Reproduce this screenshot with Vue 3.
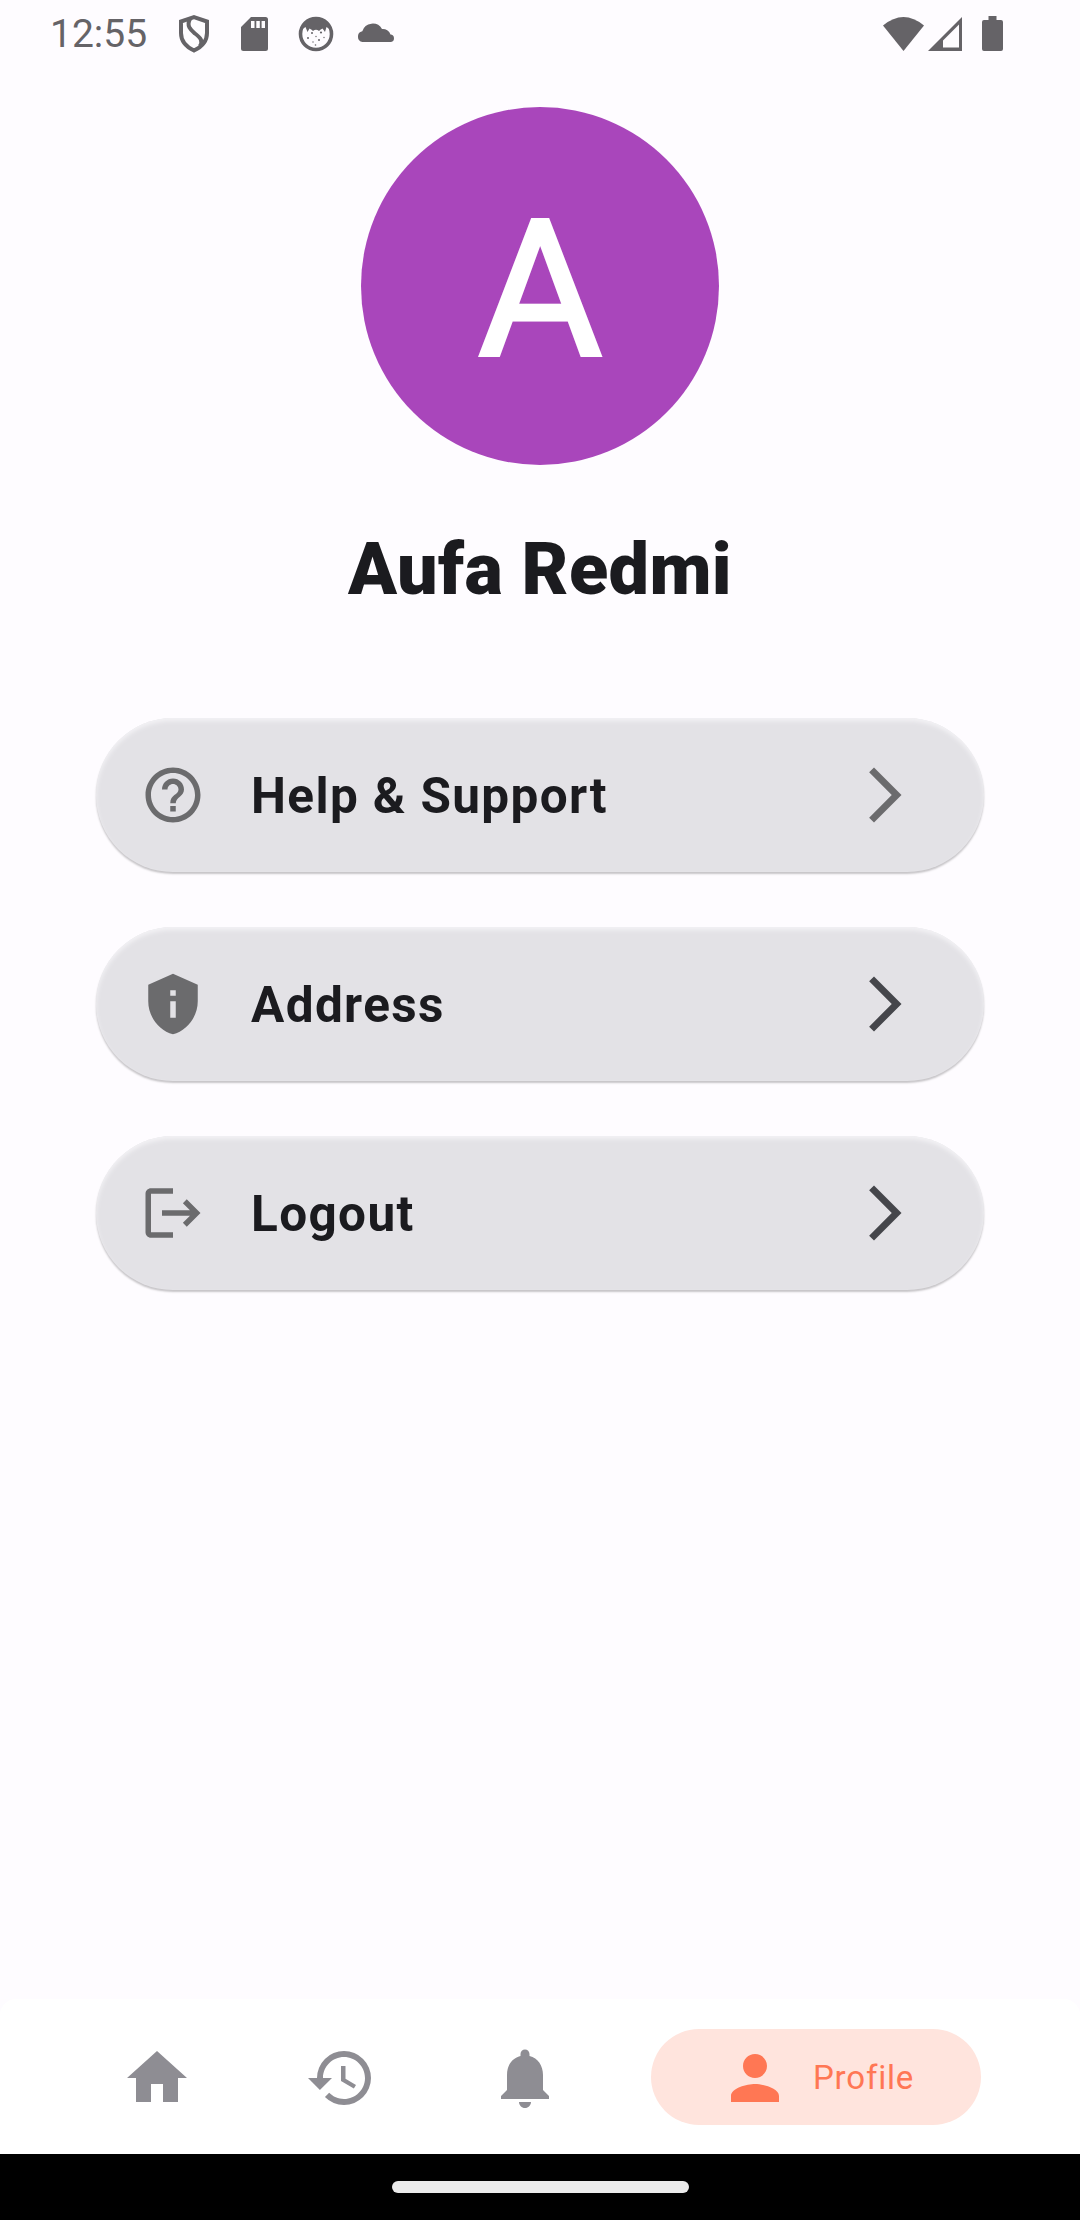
<template>
	<main class="app">
		<header class="status-bar">
			<span class="time">12:55</span>
			<div class="status-left">
				<svg class="shield" viewBox="0 0 32 38">
					<path d="M16 2.2 L29 6.5 V18 C29 26 23.500 32 16 35.500 C8.500 32 3 26 3 18 V6.500 Z" />
					<path d="M12 4 C8 11 13 15 17 18.500 C23 23 25 26 22 31" />
				</svg>
				<svg class="sd" viewBox="0 0 27 34">
					<path fill-rule="evenodd" d="M10 0H24.500Q27 0 27 2.500V31.500Q27 34 24.500 34H2.500Q0 34 0 31.500V10ZM10 4V11H13.500V4ZM15.300 4V11H18.800V4ZM20.600 4V11H24V4Z" />
				</svg>
				<svg class="face" viewBox="0 0 36 36">
					<circle class="ring" cx="18" cy="18" r="15.500" />
					<path d="M3 14C4 5 11 2 18 2S32 5 33 14L28.500 11L27 16L24.500 12.500Q22 13.500 21 15Q18 12.500 15 15Q14 13.500 11.500 12.500L9.500 16L7.500 11Z" />
					<circle v-for="(dot, index) in freckles" :key="index" :cx="dot[0]" :cy="dot[1]" :r="dot[2]" />
				</svg>
				<svg class="cloud" viewBox="0 0 38 20">
					<path d="M5.500 20A5.500 5.500 0 0 1 5.300 9.200A10.800 10.800 0 0 1 25 7A8 8 0 0 1 33.500 12.500A3.800 3.800 0 0 1 34 20Z" />
				</svg>
			</div>
			<div class="status-right">
				<svg class="wifi" viewBox="0 0 41 34">
					<path d="M0 8.500Q20.500-8.500 41 8.500L20.500 34Z" />
				</svg>
				<svg class="signal" viewBox="0 0 34 34">
					<path fill-rule="evenodd" d="M34 0V34H0ZM31 7.500L15 23.500V30.500H31Z" />
				</svg>
				<svg class="battery" viewBox="0 0 21 35">
					<path d="M6.500 0H14.500V4H19Q21 4 21 6V33Q21 35 19 35H2Q0 35 0 33V6Q0 4 2 4H6.500Z" />
				</svg>
			</div>
		</header>

		<section class="profile">
			<div class="avatar"><span>A</span></div>
			<h1>Aufa Redmi</h1>

			<div class="menu">
				<button v-for="item in menu" :key="item.label" class="card">
					<svg class="icon" viewBox="0 0 24 24"><path fill-rule="evenodd" :d="item.icon" /></svg>
					<span>{{ item.label }}</span>
					<svg :class="['chevron', { muted: item.muted }]" viewBox="0 0 24 24">
						<path d="M6.230 20.230 8 22l10-10L8 2 6.230 3.770 14.460 12z" />
					</svg>
				</button>
			</div>
		</section>

		<nav class="tabs">
			<button v-for="tab in tabs" :key="tab.name" :class="['tab', { active: tab.name == currentTab }]" @click="currentTab = tab.name">
				<svg viewBox="0 0 24 24"><path :d="tab.icon" /></svg>
				<span v-if="tab.name == currentTab">{{ tab.name }}</span>
			</button>
		</nav>

		<footer class="gesture-bar">
			<div class="handle"></div>
		</footer>
	</main>
</template>

<script setup>
import { ref } from 'vue'

const currentTab = ref('Profile')

const menu = [
	{
		label: 'Help & Support',
		icon: 'M11 18h2v-2h-2v2zm1-16C6.480 2 2 6.480 2 12s4.480 10 10 10 10-4.480 10-10S17.520 2 12 2zm0 18c-4.410 0-8-3.590-8-8s3.590-8 8-8 8 3.590 8 8-3.590 8-8 8zm0-14c-2.210 0-4 1.790-4 4h2c0-1.100.9-2 2-2s2 .9 2 2c0 2-3 1.750-3 5h2c0-2.250 3-2.500 3-5 0-2.210-1.790-4-4-4z',
		muted: true
	},
	{
		label: 'Address',
		icon: 'M12 1 3 5v6c0 5.550 3.840 10.740 9 12 5.160-1.260 9-6.450 9-12V5zM11 7h2v2h-2zM11 11h2v6h-2z'
	},
	{
		label: 'Logout',
		icon: 'M17 7l-1.410 1.410L18.170 11H8v2h10.170l-2.580 2.580L17 17l5-5zM4 5h8V3H4c-1.100 0-2 .9-2 2v14c0 1.100.9 2 2 2h8v-2H4z'
	}
]

const tabs = [
	{ name: 'Home', icon: 'M10 20v-6h4v6h5v-8h3L12 3 2 12h3v8z' },
	{
		name: 'History',
		icon: 'M13 3a9 9 0 0 0-9 9H1l3.890 3.890.07.14L9 12H6c0-3.870 3.130-7 7-7s7 3.130 7 7-3.130 7-7 7c-1.930 0-3.680-.79-4.940-2.060l-1.420 1.420A8.954 8.954 0 0 0 13 21a9 9 0 0 0 0-18zm-1 5v5l4.280 2.540.72-1.210-3.500-2.080V8z'
	},
	{
		name: 'Notifications',
		icon: 'M12 22c1.100 0 2-.9 2-2h-4c0 1.100.89 2 2 2zm6-6v-5c0-3.070-1.640-5.640-4.500-6.320V4c0-.83-.67-1.500-1.500-1.500s-1.500.67-1.500 1.500v.68C7.630 5.360 6 7.920 6 11v5l-2 2v1h16v-1z'
	},
	{
		name: 'Profile',
		icon: 'M12 12c2.210 0 4-1.790 4-4s-1.790-4-4-4-4 1.790-4 4 1.790 4 4 4zm0 2c-2.670 0-8 1.340-8 4v2h16v-2c0-2.660-5.330-4-8-4z'
	}
]

const freckles = [
	[14, 17, 1], [23, 16.5, 1.1], [10, 22, 1], [18, 20.5, 0.7],
	[26, 21.5, 0.7], [15, 26, 0.7], [21, 24, 1], [17.5, 29, 0.8]
]
</script>

<style>
body {
	background-color: #fefcff;
}
</style>

<style scoped>
* {
	margin: 0;
	padding: 0;
	box-sizing: border-box;
	font-family: Roboto, 'Liberation Sans', sans-serif;
}

.app {
	display: flex;
	flex-direction: column;
	height: 2220px;
	background-color: #fefcff;
}

svg {
	display: block;
	flex: none;
	fill: currentColor;
}

button {
	border: none;
	cursor: pointer;
}

.status-bar {
	display: flex;
	align-items: center;
	height: 67px;
	padding: 0 77px 0 50px;
	color: #656367;
}

.time {
	width: 128px;
	padding-top: 2px;
	font-size: 39px;
	line-height: 67px;
}

.status-left,
.status-right {
	display: flex;
	align-items: center;
}

.status-right {
	margin-left: auto;
}

.shield {
	width: 32px;
	height: 38px;
	fill: none;
	stroke: currentColor;
	stroke-width: 4;
}

.sd {
	width: 27px;
	height: 34px;
	margin-left: 31px;
}

.face {
	width: 36px;
	height: 36px;
	margin-left: 30px;
}

.face .ring {
	fill: none;
	stroke: currentColor;
	stroke-width: 3.600;
}

.cloud {
	width: 38px;
	height: 20px;
	margin: 0 0 3px 23px;
}

.wifi {
	width: 41px;
	height: 34px;
	margin-right: 4px;
}

.signal {
	width: 34px;
	height: 34px;
	margin-right: 20px;
}

.battery {
	width: 21px;
	height: 35px;
}

.profile {
	flex: 1;
	display: flex;
	flex-direction: column;
	align-items: center;
	padding-top: 40px;
}

.avatar {
	display: flex;
	justify-content: center;
	align-items: center;
	width: 358px;
	height: 358px;
	padding-top: 9px;
	border-radius: 50%;
	background-color: #a946bb;
	color: #fff;
	font-size: 192px;
	line-height: 1;
	-webkit-text-stroke: 3px #fff;
}

h1 {
	margin-top: 62px;
	color: #1b1b1f;
	font-size: 72px;
	font-weight: 900;
	line-height: 86px;
	letter-spacing: 0.400px;
}

.menu {
	display: flex;
	flex-direction: column;
	gap: 55px;
	width: 888px;
	margin-top: 105px;
}

.card {
	display: flex;
	align-items: center;
	height: 154px;
	padding: 0 66px 0 44px;
	border-radius: 77px;
	background-color: #e3e2e6;
	box-shadow: inset 0 3px 4px #f3f2f5, 0 2px 2px rgba(0, 0, 0, 0.22);
	color: #1b1b1f;
	font-size: 49.500px;
	font-weight: 700;
	letter-spacing: 1.375px;
}

.card span {
	padding-top: 2px;
}

.icon {
	width: 66px;
	height: 66px;
	margin-right: 45px;
	color: #6b6b6d;
}

.chevron {
	width: 66px;
	height: 66px;
	margin-left: auto;
	color: #45464b;
}

.chevron.muted {
	color: #6b6b6d;
}

.tabs {
	display: flex;
	align-items: center;
	height: 155px;
	padding: 0 99px 0 121px;
	border-radius: 16px 16px 0 0;
	background-color: #fff;
}

.tab {
	display: flex;
	flex: none;
	align-items: center;
	margin-right: 112px;
	padding-top: 2px;
	background: none;
	color: #8e8d93;
}

.tab:nth-last-child(2) {
	margin-right: 0;
}

.tab svg {
	width: 72px;
	height: 72px;
}

.tab.active {
	width: 330px;
	height: 96px;
	margin: 0 0 0 auto;
	padding-left: 68px;
	border-radius: 48px;
	background-color: #ffe4dd;
	color: #ff7754;
	font-size: 33px;
	letter-spacing: 0.800px;
}

.tab.active span {
	margin-left: 22px;
}

.gesture-bar {
	display: flex;
	justify-content: center;
	align-items: center;
	height: 66px;
	background-color: #000;
}

.handle {
	width: 297px;
	height: 12px;
	border-radius: 6px;
	background-color: #ebebeb;
}
</style>
